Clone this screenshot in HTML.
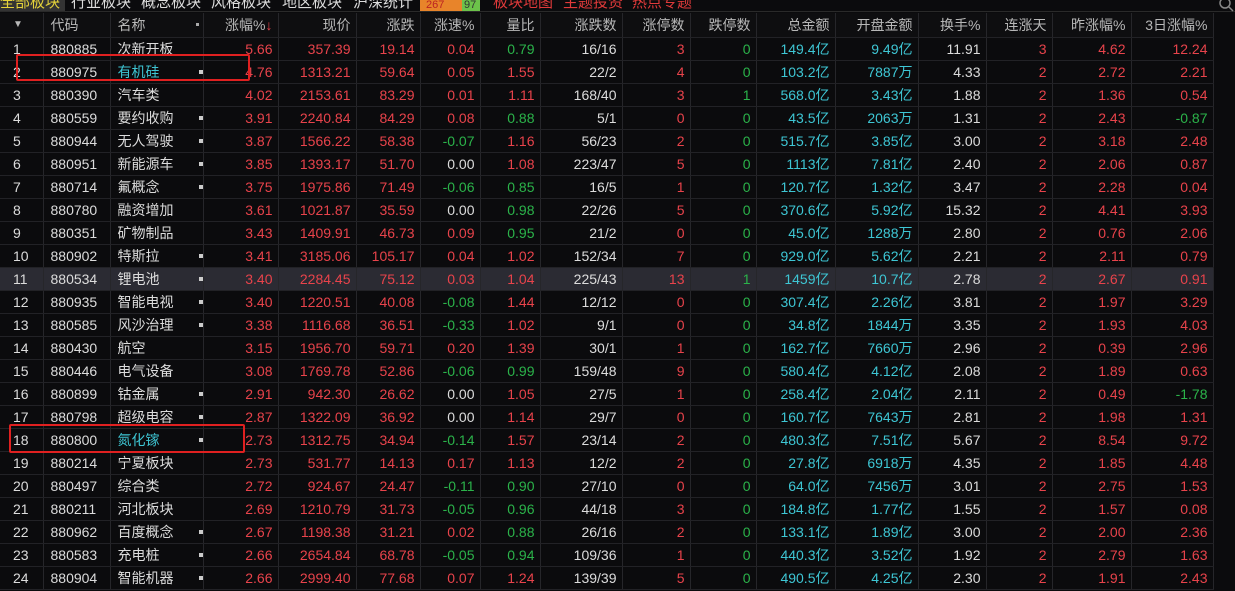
<!DOCTYPE html>
<html><head><meta charset="utf-8"><style>
*{margin:0;padding:0;box-sizing:border-box}
body{width:1235px;height:591px;overflow:hidden;background:#0b0b0d;font-family:"Liberation Sans","Noto Sans CJK SC",sans-serif;font-size:14px;color:#dcdcdc;position:relative}
.top{position:absolute;left:0;top:0;width:1235px;height:12px;overflow:hidden;background:#0b0b0d;border-bottom:1px solid #2a2a2a}
.top span{position:absolute;top:-7px;font-size:15px;line-height:20px;white-space:nowrap}
table{position:absolute;left:0;top:13px;border-collapse:collapse;table-layout:fixed;width:1213px}
td{height:23px;border-right:1px solid #26262a;border-bottom:1px solid #222226;text-align:right;padding-right:5px;white-space:nowrap;overflow:hidden;line-height:22px}
tr.h td{height:24px;color:#b8b8b8;background:#0e0e10}
td.n{text-align:left;padding-left:13px}
td.c{text-align:left;padding-left:7px}
td.m{text-align:left;padding-left:7px;position:relative}
td.m i{position:absolute;right:0px;top:9px;width:4px;height:4px;background:#ccc}
.r{color:#e8434b}.g{color:#2bb34a}.b{color:#3ec6d4}.w{color:#e8434b}
tr.hl td{background:#2b2b33}
.box{position:absolute;border:2px solid #e02020;border-radius:2px}
</style></head><body>
<div class="top">
<span style="left:0;width:65px;background:#333;color:#e4d23a;height:20px">全部板块</span>
<span style="left:71px;color:#ddd">行业板块</span>
<span style="left:141px;color:#ddd">概念板块</span>
<span style="left:211px;color:#ddd">风格板块</span>
<span style="left:282px;color:#ddd">地区板块</span>
<span style="left:353px;color:#ddd">沪深统计</span>
<span style="left:420px;width:60px;height:20px;background:linear-gradient(90deg,#e8842a 0 70%,#6cc24a 70% 100%);font-size:11px;color:#b22"><b style="font-weight:normal;position:absolute;left:6px;top:2px">267</b><b style="font-weight:normal;position:absolute;left:44px;top:2px;color:#333">97</b></span>
<span style="left:493px;color:#e03a3a">板块地图</span>
<span style="left:563px;color:#e03a3a">主题投资</span>
<span style="left:632px;color:#e03a3a">热点专题</span>
</div>
<table>
<colgroup><col style="width:43px"><col style="width:67px"><col style="width:93px"><col style="width:75px"><col style="width:78px"><col style="width:64px"><col style="width:60px"><col style="width:60px"><col style="width:82px"><col style="width:68px"><col style="width:66px"><col style="width:79px"><col style="width:83px"><col style="width:68px"><col style="width:66px"><col style="width:79px"><col style="width:82px"></colgroup>
<tr class="h"><td class="n" style="font-size:10px">▼</td><td class="c">代码</td><td class="m">名称<i style="top:10px;width:3px;height:3px;right:4px;background:#aaa"></i></td><td>涨幅%<span class="r">↓</span></td><td>现价</td><td>涨跌</td><td>涨速%</td><td>量比</td><td>涨跌数</td><td>涨停数</td><td>跌停数</td><td>总金额</td><td>开盘金额</td><td>换手%</td><td>连涨天</td><td>昨涨幅%</td><td>3日涨幅%</td></tr>
<tr><td class="n">1</td><td class="c">880885</td><td class="m">次新开板</td><td class="r">5.66</td><td class="r">357.39</td><td class="r">19.14</td><td class="r">0.04</td><td class="g">0.79</td><td>16/16</td><td class="r">3</td><td class="g">0</td><td class="b">149.4亿</td><td class="b">9.49亿</td><td>11.91</td><td class="r">3</td><td class="r">4.62</td><td class="r">12.24</td></tr>
<tr><td class="n">2</td><td class="c">880975</td><td class="m b">有机硅<i></i></td><td class="r">4.76</td><td class="r">1313.21</td><td class="r">59.64</td><td class="r">0.05</td><td class="r">1.55</td><td>22/2</td><td class="r">4</td><td class="g">0</td><td class="b">103.2亿</td><td class="b">7887万</td><td>4.33</td><td class="r">2</td><td class="r">2.72</td><td class="r">2.21</td></tr>
<tr><td class="n">3</td><td class="c">880390</td><td class="m">汽车类</td><td class="r">4.02</td><td class="r">2153.61</td><td class="r">83.29</td><td class="r">0.01</td><td class="r">1.11</td><td>168/40</td><td class="r">3</td><td class="g">1</td><td class="b">568.0亿</td><td class="b">3.43亿</td><td>1.88</td><td class="r">2</td><td class="r">1.36</td><td class="r">0.54</td></tr>
<tr><td class="n">4</td><td class="c">880559</td><td class="m">要约收购<i></i></td><td class="r">3.91</td><td class="r">2240.84</td><td class="r">84.29</td><td class="r">0.08</td><td class="g">0.88</td><td>5/1</td><td class="w">0</td><td class="g">0</td><td class="b">43.5亿</td><td class="b">2063万</td><td>1.31</td><td class="r">2</td><td class="r">2.43</td><td class="g">-0.87</td></tr>
<tr><td class="n">5</td><td class="c">880944</td><td class="m">无人驾驶<i></i></td><td class="r">3.87</td><td class="r">1566.22</td><td class="r">58.38</td><td class="g">-0.07</td><td class="r">1.16</td><td>56/23</td><td class="r">2</td><td class="g">0</td><td class="b">515.7亿</td><td class="b">3.85亿</td><td>3.00</td><td class="r">2</td><td class="r">3.18</td><td class="r">2.48</td></tr>
<tr><td class="n">6</td><td class="c">880951</td><td class="m">新能源车<i></i></td><td class="r">3.85</td><td class="r">1393.17</td><td class="r">51.70</td><td>0.00</td><td class="r">1.08</td><td>223/47</td><td class="r">5</td><td class="g">0</td><td class="b">1113亿</td><td class="b">7.81亿</td><td>2.40</td><td class="r">2</td><td class="r">2.06</td><td class="r">0.87</td></tr>
<tr><td class="n">7</td><td class="c">880714</td><td class="m">氟概念<i></i></td><td class="r">3.75</td><td class="r">1975.86</td><td class="r">71.49</td><td class="g">-0.06</td><td class="g">0.85</td><td>16/5</td><td class="r">1</td><td class="g">0</td><td class="b">120.7亿</td><td class="b">1.32亿</td><td>3.47</td><td class="r">2</td><td class="r">2.28</td><td class="r">0.04</td></tr>
<tr><td class="n">8</td><td class="c">880780</td><td class="m">融资增加</td><td class="r">3.61</td><td class="r">1021.87</td><td class="r">35.59</td><td>0.00</td><td class="g">0.98</td><td>22/26</td><td class="r">5</td><td class="g">0</td><td class="b">370.6亿</td><td class="b">5.92亿</td><td>15.32</td><td class="r">2</td><td class="r">4.41</td><td class="r">3.93</td></tr>
<tr><td class="n">9</td><td class="c">880351</td><td class="m">矿物制品</td><td class="r">3.43</td><td class="r">1409.91</td><td class="r">46.73</td><td class="r">0.09</td><td class="g">0.95</td><td>21/2</td><td class="w">0</td><td class="g">0</td><td class="b">45.0亿</td><td class="b">1288万</td><td>2.80</td><td class="r">2</td><td class="r">0.76</td><td class="r">2.06</td></tr>
<tr><td class="n">10</td><td class="c">880902</td><td class="m">特斯拉<i></i></td><td class="r">3.41</td><td class="r">3185.06</td><td class="r">105.17</td><td class="r">0.04</td><td class="r">1.02</td><td>152/34</td><td class="r">7</td><td class="g">0</td><td class="b">929.0亿</td><td class="b">5.62亿</td><td>2.21</td><td class="r">2</td><td class="r">2.11</td><td class="r">0.79</td></tr>
<tr class="hl"><td class="n">11</td><td class="c">880534</td><td class="m">锂电池<i></i></td><td class="r">3.40</td><td class="r">2284.45</td><td class="r">75.12</td><td class="r">0.03</td><td class="r">1.04</td><td>225/43</td><td class="r">13</td><td class="g">1</td><td class="b">1459亿</td><td class="b">10.7亿</td><td>2.78</td><td class="r">2</td><td class="r">2.67</td><td class="r">0.91</td></tr>
<tr><td class="n">12</td><td class="c">880935</td><td class="m">智能电视<i></i></td><td class="r">3.40</td><td class="r">1220.51</td><td class="r">40.08</td><td class="g">-0.08</td><td class="r">1.44</td><td>12/12</td><td class="w">0</td><td class="g">0</td><td class="b">307.4亿</td><td class="b">2.26亿</td><td>3.81</td><td class="r">2</td><td class="r">1.97</td><td class="r">3.29</td></tr>
<tr><td class="n">13</td><td class="c">880585</td><td class="m">风沙治理<i></i></td><td class="r">3.38</td><td class="r">1116.68</td><td class="r">36.51</td><td class="g">-0.33</td><td class="r">1.02</td><td>9/1</td><td class="w">0</td><td class="g">0</td><td class="b">34.8亿</td><td class="b">1844万</td><td>3.35</td><td class="r">2</td><td class="r">1.93</td><td class="r">4.03</td></tr>
<tr><td class="n">14</td><td class="c">880430</td><td class="m">航空</td><td class="r">3.15</td><td class="r">1956.70</td><td class="r">59.71</td><td class="r">0.20</td><td class="r">1.39</td><td>30/1</td><td class="r">1</td><td class="g">0</td><td class="b">162.7亿</td><td class="b">7660万</td><td>2.96</td><td class="r">2</td><td class="r">0.39</td><td class="r">2.96</td></tr>
<tr><td class="n">15</td><td class="c">880446</td><td class="m">电气设备</td><td class="r">3.08</td><td class="r">1769.78</td><td class="r">52.86</td><td class="g">-0.06</td><td class="g">0.99</td><td>159/48</td><td class="r">9</td><td class="g">0</td><td class="b">580.4亿</td><td class="b">4.12亿</td><td>2.08</td><td class="r">2</td><td class="r">1.89</td><td class="r">0.63</td></tr>
<tr><td class="n">16</td><td class="c">880899</td><td class="m">钴金属<i></i></td><td class="r">2.91</td><td class="r">942.30</td><td class="r">26.62</td><td>0.00</td><td class="r">1.05</td><td>27/5</td><td class="r">1</td><td class="g">0</td><td class="b">258.4亿</td><td class="b">2.04亿</td><td>2.11</td><td class="r">2</td><td class="r">0.49</td><td class="g">-1.78</td></tr>
<tr><td class="n">17</td><td class="c">880798</td><td class="m">超级电容<i></i></td><td class="r">2.87</td><td class="r">1322.09</td><td class="r">36.92</td><td>0.00</td><td class="r">1.14</td><td>29/7</td><td class="w">0</td><td class="g">0</td><td class="b">160.7亿</td><td class="b">7643万</td><td>2.81</td><td class="r">2</td><td class="r">1.98</td><td class="r">1.31</td></tr>
<tr><td class="n">18</td><td class="c">880800</td><td class="m b">氮化镓<i></i></td><td class="r">2.73</td><td class="r">1312.75</td><td class="r">34.94</td><td class="g">-0.14</td><td class="r">1.57</td><td>23/14</td><td class="r">2</td><td class="g">0</td><td class="b">480.3亿</td><td class="b">7.51亿</td><td>5.67</td><td class="r">2</td><td class="r">8.54</td><td class="r">9.72</td></tr>
<tr><td class="n">19</td><td class="c">880214</td><td class="m">宁夏板块</td><td class="r">2.73</td><td class="r">531.77</td><td class="r">14.13</td><td class="r">0.17</td><td class="r">1.13</td><td>12/2</td><td class="r">2</td><td class="g">0</td><td class="b">27.8亿</td><td class="b">6918万</td><td>4.35</td><td class="r">2</td><td class="r">1.85</td><td class="r">4.48</td></tr>
<tr><td class="n">20</td><td class="c">880497</td><td class="m">综合类</td><td class="r">2.72</td><td class="r">924.67</td><td class="r">24.47</td><td class="g">-0.11</td><td class="g">0.90</td><td>27/10</td><td class="w">0</td><td class="g">0</td><td class="b">64.0亿</td><td class="b">7456万</td><td>3.01</td><td class="r">2</td><td class="r">2.75</td><td class="r">1.53</td></tr>
<tr><td class="n">21</td><td class="c">880211</td><td class="m">河北板块</td><td class="r">2.69</td><td class="r">1210.79</td><td class="r">31.73</td><td class="g">-0.05</td><td class="g">0.96</td><td>44/18</td><td class="r">3</td><td class="g">0</td><td class="b">184.8亿</td><td class="b">1.77亿</td><td>1.55</td><td class="r">2</td><td class="r">1.57</td><td class="r">0.08</td></tr>
<tr><td class="n">22</td><td class="c">880962</td><td class="m">百度概念<i></i></td><td class="r">2.67</td><td class="r">1198.38</td><td class="r">31.21</td><td class="r">0.02</td><td class="g">0.88</td><td>26/16</td><td class="r">2</td><td class="g">0</td><td class="b">133.1亿</td><td class="b">1.89亿</td><td>3.00</td><td class="r">2</td><td class="r">2.00</td><td class="r">2.36</td></tr>
<tr><td class="n">23</td><td class="c">880583</td><td class="m">充电桩<i></i></td><td class="r">2.66</td><td class="r">2654.84</td><td class="r">68.78</td><td class="g">-0.05</td><td class="g">0.94</td><td>109/36</td><td class="r">1</td><td class="g">0</td><td class="b">440.3亿</td><td class="b">3.52亿</td><td>1.92</td><td class="r">2</td><td class="r">2.79</td><td class="r">1.63</td></tr>
<tr><td class="n">24</td><td class="c">880904</td><td class="m">智能机器<i></i></td><td class="r">2.66</td><td class="r">2999.40</td><td class="r">77.68</td><td class="r">0.07</td><td class="r">1.24</td><td>139/39</td><td class="r">5</td><td class="g">0</td><td class="b">490.5亿</td><td class="b">4.25亿</td><td>2.30</td><td class="r">2</td><td class="r">1.91</td><td class="r">2.43</td></tr>
</table>
<div class="box" style="left:16px;top:54px;width:234px;height:27px"></div>
<div class="box" style="left:9px;top:424px;width:236px;height:29px"></div>
<svg style="position:absolute;left:1218px;top:-4px" width="16" height="16"><circle cx="7" cy="7" r="5" fill="none" stroke="#888" stroke-width="1.5"/><line x1="11" y1="11" x2="15" y2="15" stroke="#888" stroke-width="1.5"/></svg>
</body></html>
